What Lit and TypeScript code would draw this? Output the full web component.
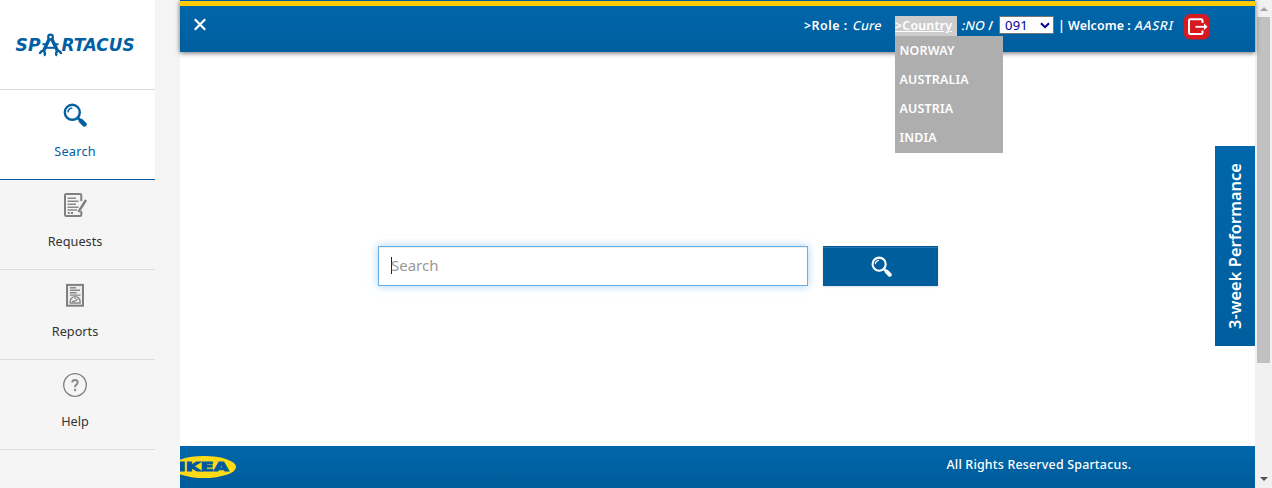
import { LitElement, html, css, svg } from "lit";
import { customElement } from "lit/decorators.js";

const lens = svg`
  <path d="M15.2 15.2 L18 18" stroke="currentColor" stroke-width="3"/>
  <path d="M18.2 18.2 L21.4 21.4" stroke="currentColor" stroke-width="4.6" stroke-linecap="round"/>
  <circle cx="9.3" cy="9.3" r="7.5" fill="none" stroke="currentColor" stroke-width="2.4"/>
  <path d="M4.9 9.3 A4.8 4.8 0 0 1 9.3 5" fill="none" stroke="currentColor" stroke-width="1.5"/>`;

const requests = svg`
  <path d="M18.3 8V2.2Q18.3 1 17.1 1H3.2Q2 1 2 2.2V21.8Q2 23 3.2 23H17.1Q18.3 23 18.3 21.8V18" fill="none" stroke="#808080" stroke-width="2"/>
  <path d="M4.5 5.2H13M4.5 8.2H15.5M4.5 11.2H13M4.5 14.2H15.5M4.5 17H14" stroke="#8a8a8a" stroke-width="1.6"/>
  <path d="M4.8 20H6.8M8 20H10" stroke="#808080" stroke-width="2"/>
  <path d="M23 7 L17 16.5 L15.5 19" fill="none" stroke="#808080" stroke-width="2.4"/>`;

const reports = svg`
  <rect x="4" y="1.9" width="16" height="20.8" fill="#ebebeb" stroke="#808080" stroke-width="2"/>
  <path d="M7 4.8H13M7 7.3H17M7 9.7H13.5M7 12.1H17.5" stroke="#8a8a8a" stroke-width="1.4"/>
  <path d="M7.3 20V18.5A4.9 4.9 0 0 1 17.1 18.5V20Z" fill="#eee" stroke="#8a8a8a" stroke-width="1.4"/>
  <path d="M9 18.5H11L15 16M12.2 14.6V16" stroke="#8a8a8a" fill="none" stroke-width="1.3"/>`;

const help = svg`
  <circle cx="12" cy="12" r="11.3" fill="none" stroke="#808080" stroke-width="1.3"/>
  <path d="M9.2 9.4Q9.3 6.9 12 6.9T14.7 9.4Q14.7 10.6 13.3 11.6Q12.1 12.5 12.1 14.3" fill="none" stroke="#8a8a8a" stroke-width="2"/>
  <circle cx="12.1" cy="17" r="1.2" fill="#8a8a8a"/>`;

const nav = [
  { label: "Search", icon: lens, active: true },
  { label: "Requests", icon: requests, active: false },
  { label: "Reports", icon: reports, active: false },
  { label: "Help", icon: help, active: false },
];

@customElement("app-root")
export class AppRoot extends LitElement {
  static styles = css`
    :host {
      display: flex;
      height: 488px;
      overflow: hidden;
      background: #fff;
      font: 12.7px/18px "Noto Sans", sans-serif;
      color: #333;
    }
    * { box-sizing: border-box; }
    svg { display: block; }
    .side { width: 180px; background: #f5f5f5; flex: none; }
    .logo { width: 155px; height: 90px; background: #fff; border-bottom: 1px solid #dcdcdc; }
    .item {
      width: 155px; height: 90px; padding: 13px 5px 0 0;
      border-bottom: 1px solid #dcdcdc;
      display: flex; flex-direction: column; align-items: center; gap: 15px;
    }
    .item.active { background: #fff; color: #0060a2; border-bottom-color: #0058a0; letter-spacing: 0.25px; }
    .main { flex: 1; display: flex; flex-direction: column; position: relative; min-width: 0; }
    .head {
      height: 52px; flex: none; display: flex; align-items: flex-start;
      border-top: 1px solid #0058a0;
      background: linear-gradient(#fc0 0 5px, transparent 5px), linear-gradient(#0067ab, #005e9e);
      background-repeat: no-repeat;
      box-shadow: 0 1px 5px rgba(0,0,0,.6);
      color: #fff; font-size: 12.4px; font-weight: 600; white-space: nowrap;
      letter-spacing: 0.1px;
      padding-top: 15px;
    }
    .close { margin: 2px 0 0 13px; width: 14px; height: 14px; flex: none; }
    .head span { display: block; height: 20px; line-height: 19px; flex: none; }
    .role { margin-left: 597px; width: 49px; letter-spacing: 0.5px; }
    .cure { width: 42px; }
    i { display: inline-block; font-style: normal; font-weight: 500; transform: skewX(-13deg); }
    .cure i { letter-spacing: 0.3px; }
    .user i { letter-spacing: 0.7px; }
    .country { width: 62px; position: relative; }
    .country u { display: block; background: #ccc; height: 20px; letter-spacing: 0.2px; }
    .menu {
      position: absolute; left: 0; top: 20px; z-index: 2; width: 108px; height: 117px;
      background: #aeaeae; padding: 0 4.5px; line-height: 29px; letter-spacing: 0.2px;
    }
    .no { width: 42px; padding-left: 5px; }
    .select {
      width: 55px; height: 18px; background: #fff; border: 1px solid #767676; color: #00008b;
      font-weight: 400; font-size: 13px; line-height: 17px; padding: 0 3px 0 5px; letter-spacing: 0.2px;
      display: flex; align-items: center; justify-content: space-between; flex: none;
    }
    .bar { width: 14px; padding-left: 4px; }
    .welcome { width: 67px; }
    .user { width: 49px; }
    .exit { margin-top: -2px; flex: none; }
    .body { flex: 1; display: flex; padding: 194px 0 0 198px; gap: 15px; }
    .field {
      width: 430px; height: 40px; border: 1px solid #66afe9;
      box-shadow: inset 0 1px 1px rgba(0,0,0,.075), 0 0 8px rgba(102,175,233,.6);
      padding: 10px 12px; display: flex; color: #999; font-size: 15px; line-height: 17px;
    }
    .caret { width: 1px; height: 17px; background: #222; margin-right: -1px; }
    .go {
      width: 115px; height: 40px; background: #005e9d; color: #fff;
      border-top: 1px solid #005694; box-shadow: inset 0 1px #2579b3, 0 1px 2px rgba(0,0,0,.15);
      display: flex; justify-content: center; padding: 9px 0 0 1px;
    }
    .tab {
      position: absolute; right: 0; top: 146px; width: 40px; height: 200px;
      background: linear-gradient(#0067ab, #005e9e); color: #fff;
      writing-mode: vertical-rl; display: flex; align-items: center; justify-content: center;
    }
    .tab b { transform: rotate(180deg); font-size: 16.4px; font-weight: 600; line-height: 20px; white-space: nowrap; letter-spacing: 0.05px; }
    .foot {
      height: 42px; flex: none; background: linear-gradient(#0067ab, #005b99);
      color: #fff; display: flex; font-size: 12.4px; font-weight: 500;
    }
    .ikea { margin-top: 10px; flex: none; }
    .rights { margin: 10px 0 0 708.5px; white-space: nowrap; letter-spacing: 0.21px; }
    .scroll {
      width: 17px; flex: none; background: #f1f1f1;
      display: flex; flex-direction: column; align-items: center;
    }
    .thumb { width: 13px; height: 346px; background: #c1c1c1; }
    .up, .down { border: 4px solid transparent; height: 0; width: 0; }
    .up { border-top: 0; border-bottom-color: #a3a3a3; margin: 7px 0 6px; }
    .down { border-bottom: 0; border-top-color: #505050; margin-top: 114px; }
    .logotext { font: italic bold 17.5px "DejaVu Sans", sans-serif; fill: #0060a2; }
    .ikeatext { font: bold 12px "DejaVu Sans", sans-serif; fill: #0058a3; stroke: #0058a3; stroke-width: 0.9; }
  `;

  render() {
    return html`
      <nav class="side">
        <div class="logo">
          <svg width="155" height="89" viewBox="0 0 155 89">
            <text class="logotext" x="15.5" y="51.3" textLength="25" lengthAdjust="spacingAndGlyphs">SP</text>
            <text class="logotext" x="61.5" y="51.3" textLength="73" lengthAdjust="spacingAndGlyphs">RTACUS</text>
            <g fill="none" stroke="#0060a2">
              <path d="M49.2 39L43.8 50.5M51.8 39L57.3 50.5" stroke-width="3.4"/>
              <path d="M45 47.8H56.5" stroke-width="2"/>
              <path d="M42.5 44.3H47M54 44.3H58.5" stroke-width="2"/>
              <circle cx="50.5" cy="37" r="2.3" stroke-width="2.2"/>
              <path d="M40 54A3 3 0 0 1 43 50.9A2.7 2.7 0 0 1 44 55.6M57 55.6A2.7 2.7 0 0 1 58 50.9A3 3 0 0 1 61 54" stroke-width="2.4"/>
            </g>
          </svg>
        </div>
        ${nav.map((n) => html`
          <div class="item ${n.active ? "active" : ""}">
            <svg width="24" height="24" viewBox="0 0 24 24">${n.icon}</svg>
            <div>${n.label}</div>
          </div>`)}
      </nav>
      <main class="main">
        <header class="head">
          <svg class="close" viewBox="0 0 14 14"><path d="M1.8 1.3L12.2 11.7M12.2 1.3L1.8 11.7" stroke="#fff" stroke-width="2.2"/></svg>
          <span class="role">&gt;Role :</span>
          <span class="cure"><i>Cure</i></span>
          <span class="country"><u>&gt;Country</u>
            <div class="menu">
              <div>NORWAY</div><div>AUSTRALIA</div><div>AUSTRIA</div><div>INDIA</div>
            </div>
          </span>
          <span class="no"><i>:NO</i> /</span>
          <div class="select">091
            <svg width="10" height="7" viewBox="0 0 10 7"><path d="M1 1.2L5 5.2L9 1.2" fill="none" stroke="#00008b" stroke-width="2"/></svg>
          </div>
          <span class="bar">|</span>
          <span class="welcome">Welcome :</span>
          <span class="user"><i>AASRI</i></span>
          <svg class="exit" width="26" height="26" viewBox="0 0 26 26">
            <rect width="25.5" height="25.5" rx="6" fill="#d71920"/>
            <path d="M18.5 9V6.5Q18.5 5.2 17.2 5.2H6.3Q5 5.2 5 6.5V18.7Q5 20 6.3 20H17.2Q18.5 20 18.5 18.7V16.5" fill="none" stroke="#fff" stroke-width="2"/>
            <path d="M11.5 12.8H22" stroke="#fff" stroke-width="1.8"/>
            <path d="M20 9.6L23.6 12.8L20 16Z" fill="#fff"/>
          </svg>
        </header>
        <section class="body">
          <div class="field"><div class="caret"></div>Search</div>
          <div class="go"><svg width="21" height="21" viewBox="0 0 24 24">${lens}</svg></div>
        </section>
        <div class="tab"><b>3-week Performance</b></div>
        <footer class="foot">
          <svg class="ikea" width="58" height="22" viewBox="0 0 58 22">
            <ellipse cx="24" cy="11" rx="32" ry="11" fill="#ffdb17"/>
            <text class="ikeatext" x="-1.5" y="15.3" textLength="50" lengthAdjust="spacingAndGlyphs">IKEA</text>
          </svg>
          <div class="rights">All Rights Reserved Spartacus.</div>
        </footer>
      </main>
      <div class="scroll"><div class="up"></div><div class="thumb"></div><div class="down"></div></div>
    `;
  }
}
